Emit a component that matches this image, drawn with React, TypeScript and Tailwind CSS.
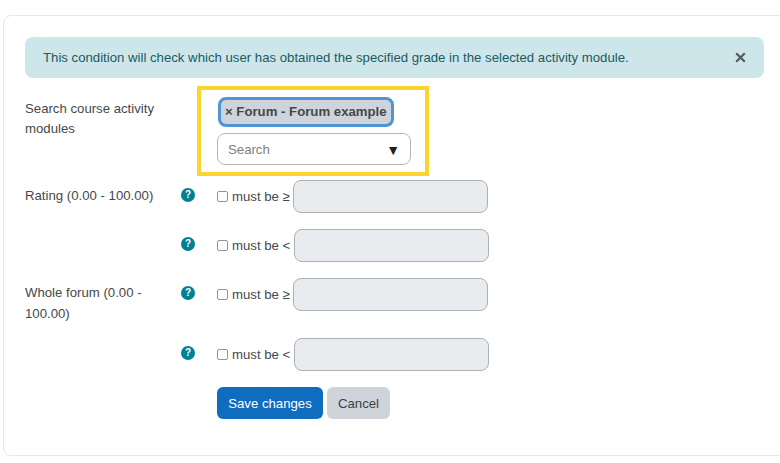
import React from "react";

function Help() {
  return (
    <span className="flex h-[14px] w-[14px] items-center justify-center rounded-full bg-[#008196] text-[10px] font-bold leading-none text-white">?</span>
  );
}

function Row({ label, op, spanW, mb, labelPt }: { label?: string; op: string; spanW: string; mb: string; labelPt: string }) {
  return (
    <div className={`flex h-[33px] items-start ${mb}`}>
      <div className={`w-[156px] shrink-0 pr-[8px] text-[13.2px] leading-[20.5px] text-[#45484b] ${labelPt}`}>{label}</div>
      <div className="w-[36px] shrink-0 pt-[8px]"><Help /></div>
      <div className="flex items-start">
        <input type="checkbox" className="mt-[11px] h-[11px] w-[11px] appearance-none rounded-[2px] border border-[#8f959e] bg-white" />
        <span className={`ml-[4px] mt-[7px] whitespace-nowrap text-[13.2px] leading-[20px] text-[#45484b] ${spanW}`}>must be {op}</span>
        <div className="h-[33px] w-[195px] rounded-[8px] border border-[#adb1b5] bg-[#e9ecef]" />
      </div>
    </div>
  );
}

export default function App() {
  return (
    <div className="h-[463px] w-[780px] overflow-hidden bg-white font-['Liberation_Sans',Arial,sans-serif]">
      <div className="ml-[3px] mt-[15px] h-[441px] w-[800px] rounded-[8px] border border-[#e6e7e9] pl-[21px] pt-[21px]">
        <div className="mb-[8px] flex h-[41px] w-[739px] items-center justify-between rounded-[8px] bg-[#cde6ea] pl-[18px] pr-[18px] text-[13.2px] text-[#1c5a63]">
          <span>This condition will check which user has obtained the specified grade in the selected activity module.</span>
          <svg width="11" height="11" viewBox="0 0 11 11" className="-mt-px"><path d="M1.2 1.2 9.8 9.8M9.8 1.2 1.2 9.8" stroke="#555a5d" strokeWidth="2.2" /></svg>
        </div>

        <div className="mb-[4px] flex items-start">
          <div className="w-[172px] shrink-0 pr-[20px] pt-[13px] text-[13.2px] leading-[20px] text-[#45484b]">Search course activity modules</div>
          <div className="h-[90px] w-[232px] border-4 border-[#fbd52e] pl-[16px] pt-[7px]">
            <div className="ml-[1px] flex h-[30px] w-[176px] items-center rounded-[8px] border-[3px] border-[#4f94d4] bg-[#ced4da] pl-[4px] text-[13.2px] font-bold whitespace-nowrap text-[#45484b]">× Forum - Forum example</div>
            <div className="mt-[6px] flex h-[32px] w-[194px] items-center justify-between rounded-[8px] border border-[#b4b7ba] bg-white pl-[10px] pr-[10px] pt-px text-[13.2px] text-[#7b8086]">
              <span>Search</span>
              <span className="text-[14px] leading-none text-[#1d2125]">▼</span>
            </div>
          </div>
        </div>

        <Row label="Rating (0.00 - 100.00)" op="≥" spanW="w-[61px]" mb="mb-[16px]" labelPt="pt-[6px]" />
        <Row op="<" spanW="w-[62px]" mb="mb-[16px]" labelPt="pt-[5px]" />
        <Row label="Whole forum (0.00 - 100.00)" op="≥" spanW="w-[61px]" mb="mb-[27px]" labelPt="pt-[5px]" />
        <Row op="<" spanW="w-[62px]" mb="mb-[16px]" labelPt="pt-[5px]" />

        <div className="ml-[192px] flex gap-[4px]">
          <button className="h-[32px] w-[106px] rounded-[6px] bg-[#0f6cbf] pt-px text-[13.2px] text-white">Save changes</button>
          <button className="h-[32px] w-[63px] rounded-[6px] bg-[#ced4da] pt-px text-[13.2px] text-[#3c3f42]">Cancel</button>
        </div>
      </div>
    </div>
  );
}
